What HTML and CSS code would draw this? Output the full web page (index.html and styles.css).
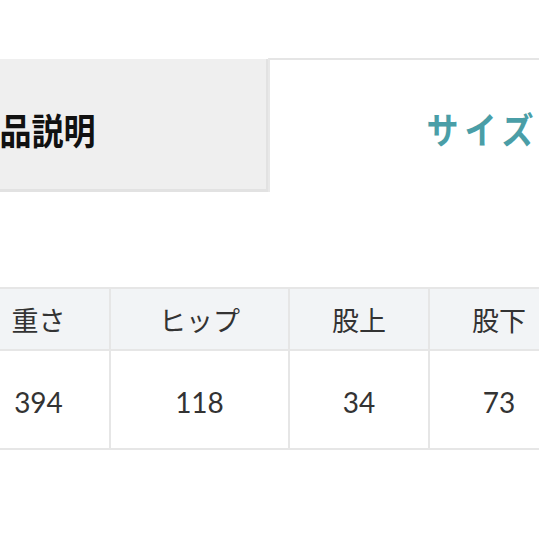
FILE: index.html
```html
<!DOCTYPE html>
<html lang="ja">
<head>
<meta charset="utf-8">
<link rel="stylesheet" href="styles.css">
</head>
<body>
<div class="page">
  <div class="tabs">
    <div class="tab tab-off"><span class="label">商品説明</span></div>
    <div class="tab tab-on"><span class="label">サイズ表</span></div>
  </div>
  <div class="size-table">
    <div class="cell head">重さ</div>
    <div class="cell head">ヒップ</div>
    <div class="cell head">股上</div>
    <div class="cell head">股下</div>
    <div class="cell num">394</div>
    <div class="cell num">118</div>
    <div class="cell num">34</div>
    <div class="cell num">73</div>
  </div>
</div>
</body>
</html>
```
FILE: styles.css
```css
html, body {
  margin: 0;
  padding: 0;
  background: #fff;
  overflow: hidden;
}
.page {
  width: 539px;
  height: 539px;
  overflow: hidden;
  font-family: Lato, "Noto Sans CJK JP", sans-serif;
}
.tabs {
  display: flex;
  margin-top: 58px;
  margin-left: -203px;
  width: 1000px;
}
.tab {
  box-sizing: border-box;
  height: 134px;
  display: flex;
  align-items: center;
  justify-content: center;
  font-family: "Noto Sans CJK JP", sans-serif;
  font-weight: 700;
  font-size: 32px;
}
.tab-off {
  width: 471px;
  margin-top: 1px;
  height: 133px;
  background: #efefef;
  border-bottom: 3px solid #e2e2e2;
  border-right: 2px solid #e2e2e2;
  color: #111;
  padding-top: 10px;
}
.tab-on {
  width: 466px;
  border-top: 2px solid #e5e5e5;
  border-left: 2px solid #e8e8e8;
  background: #fff;
  color: #4a9ea7;
  letter-spacing: 6px;
  padding-top: 4px;
}
.label {
  display: inline-block;
  transform: scaleY(1.15);
}
.size-table {
  display: grid;
  grid-template-columns: 141px 177px 138px 138px;
  grid-template-rows: 60px 97px;
  gap: 2px;
  padding: 2px;
  background: #e6e6e6;
  margin-top: 95px;
  margin-left: -34px;
  width: max-content;
}
.cell {
  display: flex;
  align-items: center;
  justify-content: center;
  color: #333;
}
.head {
  background: #f2f4f6;
  font-family: "Noto Sans CJK JP", sans-serif;
  font-size: 27px;
  font-weight: 400;
  padding-top: 0;
}
.num {
  background: #fff;
  font-family: Lato, sans-serif;
  font-size: 28px;
  padding-top: 4px;
}
```
